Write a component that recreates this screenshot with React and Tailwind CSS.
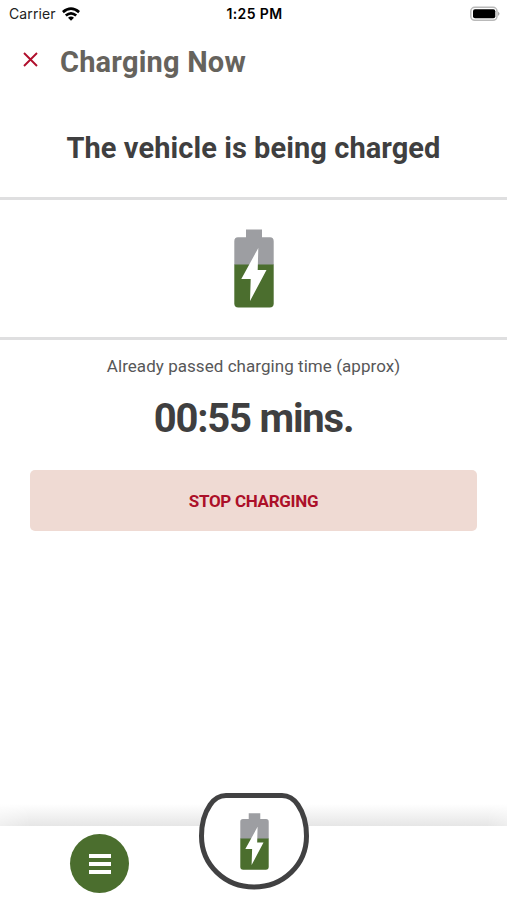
const BatteryIcon = ({ className }) => (
    <svg viewBox="0 0 40 79" className={className} aria-hidden="true">
        <path d="M12 0.5H28V8.2H36Q39.7 8.2 39.7 12.2V36H0.3V12.2Q0.3 8.2 4 8.2H12Z" fill="#9d9ea2" />
        <path d="M0.3 35.5H39.7V74.5Q39.7 78.5 35.7 78.5H4.3Q0.3 78.5 0.3 74.5Z" fill="#4b6e2e" />
        <path d="M24.3 19L7.3 50H16.7L16 72L32.5 41H23.7Z" fill="#fff" />
    </svg>
);

const StatusBar = () => (
    <div className="h-7 pb-px grid grid-cols-3 items-center pl-[9px] pr-[7px] font-['Inter',sans-serif] text-black">
        <div className="flex items-center gap-[6px]">
            <span className="text-[14px] tracking-[0.1px] text-[#222]">Carrier</span>
            <svg viewBox="0 0 18 14" className="w-[18px] h-[14px]" fill="none" stroke="#000" strokeWidth="2.7">
                <path d="M0.9 5.1Q9 -1.7 17.1 5.1" />
                <path d="M3.8 8.6Q9 4.1 14.2 8.6" />
                <path d="M9 13.8L6 10.8Q9 8.4 12 10.8Z" fill="#000" stroke="none" />
            </svg>
        </div>
        <span className="text-center text-[14px] font-semibold tracking-[0.4px]">1:25 PM</span>
        <svg viewBox="0 0 30 16" className="w-[30px] h-4 justify-self-end">
            <rect x="0.8" y="1.3" width="26.2" height="13" rx="4" fill="#fff" stroke="#b9b9b9" strokeWidth="1.5" />
            <rect x="3" y="3.3" width="22.3" height="9" rx="2" fill="#000" />
            <path d="M28 5.5Q31 7.8 28 10Z" fill="#aaa" />
        </svg>
    </div>
);

const App = () => {
    return (
        <div className="w-full h-screen bg-white flex flex-col overflow-hidden font-['Roboto',sans-serif] text-[#3f3f40]">
            <StatusBar />

            {/* Header */}
            <header className="h-[66px] flex items-center pl-[23px]">
                <button aria-label="Close" className="mb-[3px]">
                    <svg viewBox="0 0 15 15" className="w-[15px] h-[15px]" stroke="#b00f2c" strokeWidth="1.9">
                        <path d="M1 1L14 14M14 1L1 14" />
                    </svg>
                </button>
                <h1 className="ml-[22px] pt-[2px] text-[29px] leading-none font-bold text-[#66635d] tracking-[0.2px]">Charging Now</h1>
            </header>

            <h2 className="h-[103px] pt-[5px] flex items-center justify-center text-[29px] leading-none font-bold tracking-[0.07px] whitespace-nowrap">
                The vehicle is being charged
            </h2>

            <div className="h-[143px] border-y-3 border-[#dfdfe0] flex items-center justify-center">
                <BatteryIcon className="w-10 h-[79px]" />
            </div>

            {/* Elapsed time */}
            <div className="h-[130px] pt-[16px] text-center">
                <p className="text-[17px] leading-5 tracking-[0.05px] text-[#575758]">Already passed charging time (approx)</p>
                <p className="mt-[21px] text-[40px] leading-[44px] font-bold tracking-[-1.2px]">00:55 mins.</p>
            </div>

            <button className="mx-[30px] h-[61px] pt-[2px] shrink-0 rounded-[5px] bg-[#efdad3] text-[17px] font-bold tracking-[-0.3px] text-[#ac1029]">
                STOP CHARGING
            </button>

            {/* Bottom navigation */}
            <div className="mt-auto h-[22px] bg-linear-to-b from-white to-[#e6e6e6] mask-r-from-96% mask-l-from-94% mask-l-to-110% mask-r-to-110%" />
            <nav className="relative h-[74px] shrink-0 bg-white pl-[70px] pt-[8px]">
                <button aria-label="Menu" className="size-[59px] rounded-full bg-[#4b6e2e] flex flex-col items-center justify-center gap-1">
                    <span className="w-[22px] h-1 bg-white" />
                    <span className="w-[22px] h-1 bg-white" />
                    <span className="w-[22px] h-1 bg-white" />
                </button>
                <button aria-label="Charging status" className="absolute left-[199px] -top-[33px] w-[110px] h-[97px]">
                    <svg viewBox="0 0 110 97" className="absolute inset-0 w-full h-full">
                        <path
                            d="M27 2.5H83C90 2.5 95 6 99 12C104.5 20 107.5 31 107.5 43C107.5 72 84 94 55 94C26 94 2.5 72 2.5 43C2.5 31 5.5 20 11 12C15 6 20 2.5 27 2.5Z"
                            fill="#fff"
                            stroke="#414142"
                            strokeWidth="5"
                        />
                    </svg>
                    <BatteryIcon className="relative mx-auto w-[29px] h-[57px]" />
                </button>
            </nav>
        </div>
    );
};

export default App;
